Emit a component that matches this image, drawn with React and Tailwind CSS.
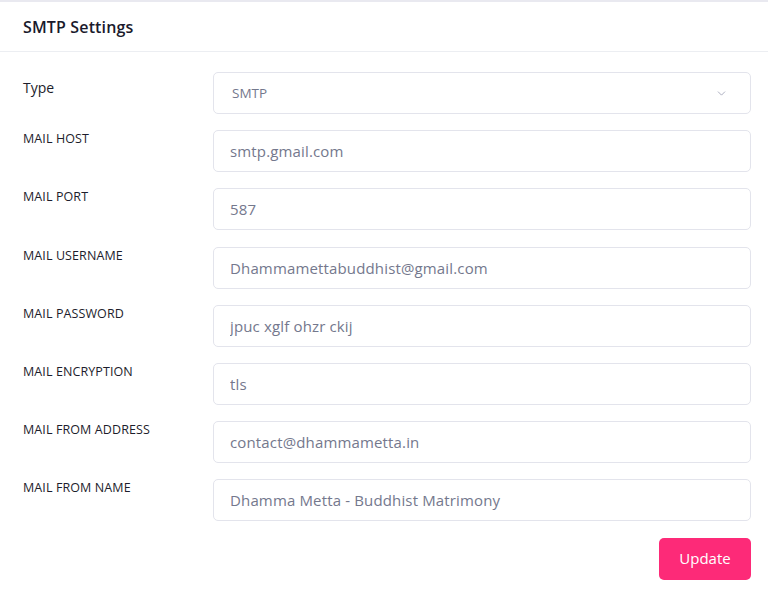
import { ChevronDown } from 'lucide-react';

const fields = [
  { label: 'MAIL HOST', value: 'smtp.gmail.com' },
  { label: 'MAIL PORT', value: '587' },
  { label: 'MAIL USERNAME', value: 'Dhammamettabuddhist@gmail.com' },
  { label: 'MAIL PASSWORD', value: 'jpuc xglf ohzr ckij' },
  { label: 'MAIL ENCRYPTION', value: 'tls' },
  { label: 'MAIL FROM ADDRESS', value: 'contact@dhammametta.in' },
  { label: 'MAIL FROM NAME', value: 'Dhamma Metta - Buddhist Matrimony' },
];

const App = () => {
  return (
    <div
      className="w-[768px] h-[599px] bg-white border-t-2 border-[#e9e9f0] overflow-hidden"
      style={{ fontFamily: '"Open Sans", "Liberation Sans", sans-serif' }}
    >
      <div className="h-[50px] flex items-center px-[23px] border-b border-[#eceef2]">
        <h4 className="text-[16px] font-semibold text-[#1a1a2c] tracking-[0.15px]">SMTP Settings</h4>
      </div>

      <div className="pl-[23px] pr-[17px] pt-5 flex flex-col gap-[16.2px]">
        <div className="grid grid-cols-[190px_1fr]">
          <label className="pt-[7px] text-[14px] leading-[18px] text-[#1d1d2c]">Type</label>
          <div className="h-[42px] border border-[#e3e4ec] rounded-[5px] flex items-center justify-between pl-[18px] pr-[22px] text-[13.5px] text-[#74788d]">
            <span>SMTP</span>
            <ChevronDown className="w-[13px] h-[13px] text-[#8a8fa6]" strokeWidth={1.3} />
          </div>
        </div>

        {fields.map((f) => (
          <div key={f.label} className="grid grid-cols-[190px_1fr]">
            <label className="text-[12.5px] leading-[18px] text-[#1d1d2c] tracking-[0.1px]">{f.label}</label>
            <input
              type="text"
              defaultValue={f.value}
              className="h-[42px] border border-[#e3e4ec] rounded-[5px] px-4 text-[15px] tracking-[0.15px] text-[#74788d] focus:outline-none"
            />
          </div>
        ))}

        <div className="flex justify-end">
          <button className="w-[92px] h-[42px] rounded-[5px] bg-[#fd2a78] text-white text-[15px] font-medium">
            Update
          </button>
        </div>
      </div>
    </div>
  );
};

export default App;
